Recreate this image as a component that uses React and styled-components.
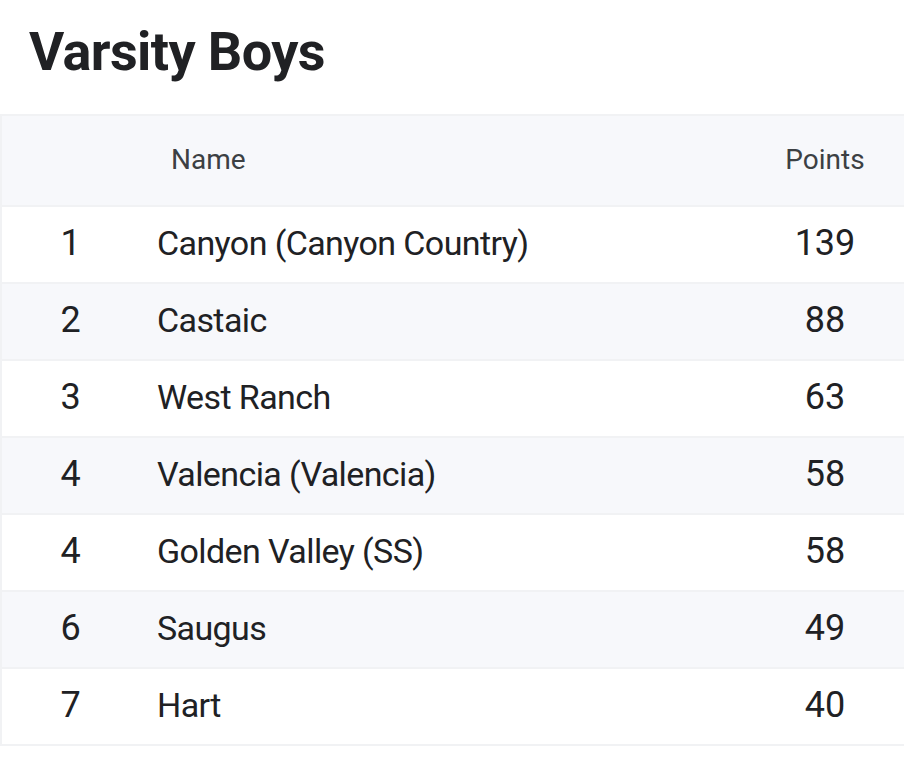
import React from "react";
import styled, { createGlobalStyle } from "styled-components";

const Global = createGlobalStyle`
  html, body { margin: 0; padding: 0; background: #ffffff; }
  body { font-family: Roboto, "Noto Sans", Arial, sans-serif; color: #202124; }
`;

const Page = styled.div`
  width: 904px;
  overflow: hidden;
`;

const Title = styled.h1`
  margin: 0;
  padding: 20px 0 30px 29px;
  font-size: 54px;
  line-height: 64px;
  font-weight: 700;
  letter-spacing: -0.6px;
  color: #202124;
`;

const Table = styled.div`
  border-top: 2px solid #f1f2f4;
  border-left: 2px solid #f1f2f4;
  border-bottom: 2px solid #f1f2f4;
`;

const Row = styled.div`
  display: grid;
  grid-template-columns: 137px 1fr 158px;
  align-items: center;
  height: ${(p) => (p.$header ? "89px" : "75px")};
  background: ${(p) => (p.$shade ? "#f7f8fb" : "#ffffff")};
  & + & {
    border-top: 2px solid #f1f2f4;
  }
`;

const HeadCell = styled.div`
  font-size: 28px;
  color: #3c4043;
  text-align: ${(p) => (p.$center ? "center" : "left")};
  padding-left: ${(p) => p.$pad || 0}px;
  padding-bottom: 2px;
`;

const Cell = styled.div`
  font-size: ${(p) => (p.$num ? "36px" : "34px")};
  letter-spacing: ${(p) => (p.$num ? "0" : "-0.6px")};
  color: #202124;
  text-align: ${(p) => (p.$num ? "center" : "left")};
  padding-left: ${(p) => p.$pad || 0}px;
  padding-bottom: 4px;
  white-space: nowrap;
`;

const data = [
  [1, "Canyon (Canyon Country)", 139],
  [2, "Castaic", 88],
  [3, "West Ranch", 63],
  [4, "Valencia (Valencia)", 58],
  [4, "Golden Valley (SS)", 58],
  [6, "Saugus", 49],
  [7, "Hart", 40],
];

export default function App() {
  return (
    <Page>
      <Global />
      <Title>Varsity Boys</Title>
      <Table>
        <Row $header $shade>
          <HeadCell />
          <HeadCell $pad={32}>Name</HeadCell>
          <HeadCell $center>Points</HeadCell>
        </Row>
        {data.map(([rank, name, pts], i) => (
          <Row key={i} $shade={i % 2 === 1}>
            <Cell $num>{rank}</Cell>
            <Cell $pad={18}>{name}</Cell>
            <Cell $num>{pts}</Cell>
          </Row>
        ))}
      </Table>
    </Page>
  );
}
